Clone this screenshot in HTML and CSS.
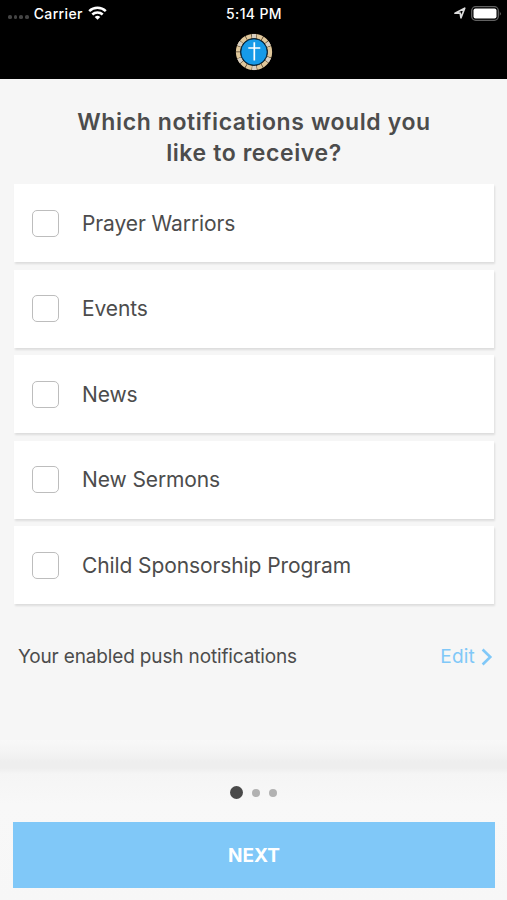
FILE: index.html
```html
<!DOCTYPE html>
<html lang="en">
<head>
  <meta charset="UTF-8">
  <meta name="viewport" content="width=device-width, initial-scale=1.0">
  <title>Notifications</title>
  <link rel="stylesheet" href="styles.css">
</head>
<body>
  <header>
    <div class="status-bar">
      <div class="carrier">
        <span class="signal"><i></i><i></i><i></i><i></i></span>
        <span class="carrier-name">Carrier</span>
        <svg class="wifi" width="19" height="14" viewBox="0 0 19 14" fill="none" stroke="#fff" stroke-width="2.5">
          <path d="M1.2 5.2C5.8 .7 13.2 .7 17.8 5.2"/>
          <path d="M4.3 8.5C7.2 5.7 11.8 5.7 14.7 8.5"/>
          <path d="M9.5 13.8L6.7 11Q9.5 8.7 12.3 11Z" fill="#fff" stroke="none"/>
        </svg>
      </div>
      <div class="time">5:14 PM</div>
      <div class="battery">
        <svg width="12" height="12" viewBox="0 0 12 12" fill="none" stroke="#ddd" stroke-width="1.7" stroke-linejoin="round">
          <path d="M1 6.2L10.7 1.2L7 10.8L6.2 6.2Z"/>
        </svg>
        <svg width="31" height="15" viewBox="0 0 31 15">
          <rect x=".7" y=".7" width="26.6" height="13.6" rx="4" fill="none" stroke="#626262" stroke-width="1.3"/>
          <rect x="2.5" y="2.5" width="23" height="10" rx="2" fill="#fff"/>
          <path d="M28.8 5.2Q30.6 7.5 28.8 9.8Z" fill="#777"/>
        </svg>
      </div>
    </div>
    <svg class="logo" width="38" height="38" viewBox="0 0 38 38">
      <circle cx="19" cy="19" r="16" fill="none" stroke="#4b3b29" stroke-width="4.4"/>
      <circle cx="19" cy="19" r="16" fill="none" stroke="#dfc79b" stroke-width="4.2" stroke-dasharray="5 .7 4.2 .6 5.6 .7"/>
      <circle cx="19" cy="19" r="16" fill="none" stroke="#d6cec2" stroke-width="4" stroke-dasharray="4.2 12.6" stroke-dashoffset="-5.7"/>
      <circle cx="19" cy="19" r="13.2" fill="#169ae8" stroke="#062f4b" stroke-width="1"/>
      <path d="M19.3 9.3V27.5M13.3 15H25.3" stroke="#fff" stroke-width="1.7"/>
    </svg>
  </header>
  <main>
    <h1>Which notifications would you<br>like to receive?</h1>
    <div class="options">
      <label class="option"><input type="checkbox"><span>Prayer Warriors</span></label>
      <label class="option"><input type="checkbox"><span>Events</span></label>
      <label class="option"><input type="checkbox"><span>News</span></label>
      <label class="option"><input type="checkbox"><span>New Sermons</span></label>
      <label class="option"><input type="checkbox"><span>Child Sponsorship Program</span></label>
    </div>
    <div class="enabled">
      <span>Your enabled push notifications</span>
      <a class="edit">Edit
        <svg width="12" height="18" viewBox="0 0 12 18" fill="none" stroke="#80c8f8" stroke-width="2.6">
          <path d="M1.6 1.5L9.3 9L1.6 16.5"/>
        </svg>
      </a>
    </div>
  </main>
  <footer>
    <div class="dots"><i class="active"></i><i></i><i></i></div>
    <button class="next">NEXT</button>
  </footer>
</body>
</html>
```
FILE: styles.css
```css
* {
  box-sizing: border-box;
}
body {
  margin: 0;
  height: 900px;
  display: flex;
  flex-direction: column;
  overflow: hidden;
  background-color: #f6f6f6;
  color: #4c4c4c;
  font-family: Inter, "Liberation Sans", sans-serif;
}
header {
  height: 79px;
  background-color: #000;
  color: #fff;
  text-align: center;
}
.status-bar {
  display: grid;
  grid-template-columns: 1fr auto 1fr;
  align-items: center;
  height: 26px;
  padding: 0 5px 0 8px;
  font-size: 14px;
  font-weight: 500;
  letter-spacing: 0.35px;
}
.carrier {
  display: flex;
  align-items: center;
}
.signal {
  display: flex;
  gap: 2px;
  margin: 8px 5px 0 0;
}
.signal i {
  width: 3.7px;
  height: 3.7px;
  border-radius: 50%;
  background-color: #444;
}
.wifi {
  margin-left: 5px;
}
.time {
  margin-right: 2px;
}
.battery {
  display: flex;
  justify-content: flex-end;
  align-items: center;
  gap: 5px;
}
.logo {
  display: block;
  margin: 7px auto 0;
}
main {
  flex: 1;
  padding: 28px 13px 0 14px;
}
h1 {
  margin: 0 0 15px;
  font-size: 23px;
  line-height: 31px;
  font-weight: 600;
  letter-spacing: 0.6px;
  text-align: center;
}
.options {
  display: flex;
  flex-direction: column;
  gap: 7.5px;
}
.option {
  display: flex;
  align-items: center;
  height: 78px;
  padding-left: 18px;
  background-color: #fff;
  box-shadow: 1px 2px 2px rgba(0, 0, 0, 0.1);
  font-size: 21px;
  letter-spacing: -0.1px;
}
.option input {
  appearance: none;
  width: 27px;
  height: 27px;
  margin: 0 23px 0 0;
  border: 1.5px solid #bdbdbd;
  border-radius: 5px;
  background-color: #fff;
}
.enabled {
  display: flex;
  justify-content: space-between;
  align-items: center;
  margin-top: 41px;
  padding: 0 1px 0 4px;
  font-size: 19px;
  letter-spacing: -0.15px;
}
.edit {
  display: flex;
  align-items: center;
  gap: 6px;
  color: #80c8f8;
  letter-spacing: 0.2px;
}
footer {
  height: 160px;
  padding: 46px 12px 0 13px;
  background: linear-gradient(#f8f8f8, #f3f3f3 14px, #eeeeee 22px, #eeeeee 28px, #f5f5f5 34px, #f8f8f8 65px, #f7f7f7);
}
.dots {
  display: flex;
  justify-content: center;
  align-items: center;
  gap: 9px;
  height: 13px;
  margin-right: 1px;
}
.dots i {
  width: 8px;
  height: 8px;
  border-radius: 50%;
  background-color: #b2b2b2;
}
.dots .active {
  width: 13px;
  height: 13px;
  background-color: #4a4a4a;
}
.next {
  display: block;
  width: 100%;
  height: 66px;
  margin-top: 23px;
  border: none;
  background-color: #80c8f8;
  color: #fff;
  font-family: inherit;
  font-size: 19px;
  font-weight: 700;
}
```
